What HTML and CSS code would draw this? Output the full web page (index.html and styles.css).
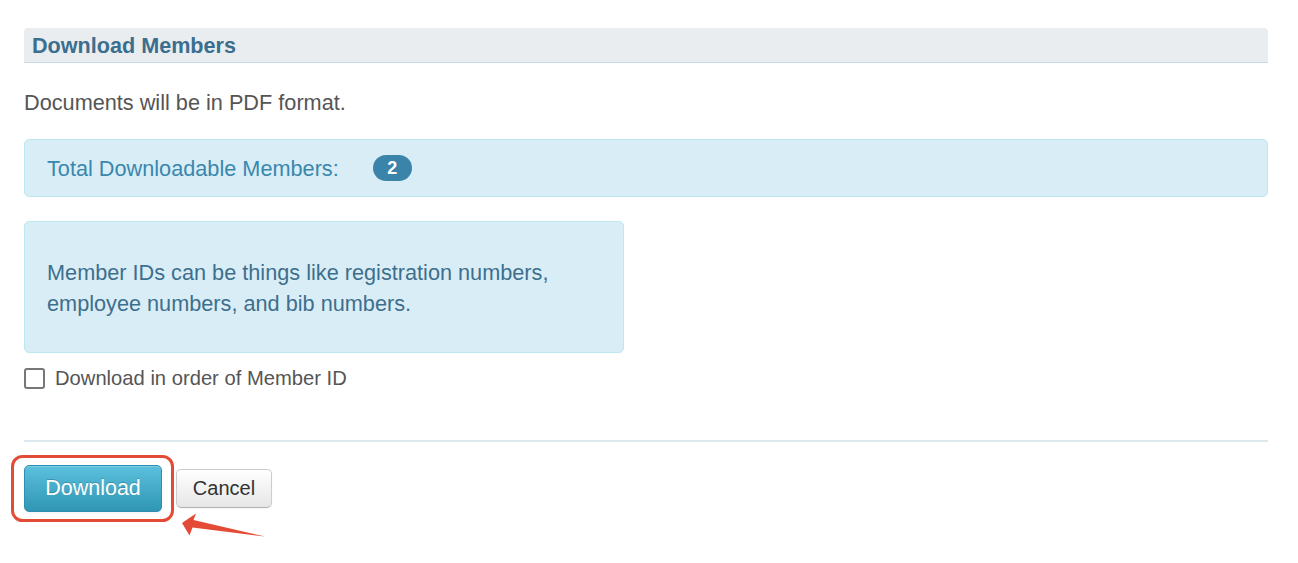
FILE: index.html
```html
<!DOCTYPE html>
<html>
<head>
<meta charset="utf-8">
<link rel="stylesheet" href="styles.css">
</head>
<body>
<div class="page">
  <div class="panel">
    <h2 class="panel-title">Download Members</h2>
    <p class="intro">Documents will be in PDF format.</p>
    <div class="alert alert-total">
      <span class="total-label">Total Downloadable Members:</span>
      <span class="badge">2</span>
    </div>
    <div class="alert alert-note">
      Member IDs can be things like registration numbers,<br>employee numbers, and bib numbers.
    </div>
    <label class="check-row">
      <span class="checkbox"></span>
      <span class="check-label">Download in order of Member ID</span>
    </label>
    <hr class="divider">
    <div class="actions">
      <button class="btn btn-primary">Download</button>
      <button class="btn btn-default">Cancel</button>
    </div>
  </div>
  <svg class="annotation" width="1298" height="563" viewBox="0 0 1298 563">
    <rect x="12.5" y="456.5" width="160" height="64" rx="10" ry="10" fill="none" stroke="#e34b36" stroke-width="3"/>
    <polygon points="182,523 196,513.5 193.5,520 265,536.5 192.5,527.5 189.5,535.5" fill="#e34b36"/>
  </svg>
</div>
</body>
</html>
```

FILE: styles.css
```css
html, body {
  margin: 0;
  padding: 0;
  background: #ffffff;
}

.page {
  position: relative;
  width: 1298px;
  height: 563px;
  overflow: hidden;
  font-family: "Liberation Sans", Arial, sans-serif;
}

.panel {
  padding: 28px 30px 0 24px;
  width: 1244px;
}

.panel-title {
  margin: 0;
  height: 34px;
  line-height: 35px;
  padding-left: 8px;
  background: #e9edf0;
  border-bottom: 1px solid #c9dcea;
  border-radius: 4px 4px 0 0;
  font-size: 21.6px;
  font-weight: bold;
  color: #3b6e8f;
}

.intro {
  margin: 24px 0 21px 0;
  font-size: 21.7px;
  line-height: 31px;
  color: #555555;
}

.alert {
  background: #d9edf7;
  border: 1px solid #bce8f1;
  border-radius: 5px;
  font-size: 21.7px;
  line-height: 31px;
}

.alert-total {
  display: flex;
  align-items: center;
  height: 56px;
  padding: 0 22px;
  color: #3a87ad;
}

.badge {
  display: inline-flex;
  align-items: center;
  justify-content: center;
  margin-left: 34px;
  width: 39px;
  height: 26px;
  border-radius: 13px;
  background: #3a84aa;
  color: #ffffff;
  font-weight: bold;
  font-size: 18px;
  line-height: 26px;
}

.alert-note {
  width: 554px;
  margin-top: 24px;
  padding: 35px 22px 33px 22px;
  color: #3d6f8d;
}

.check-row {
  display: flex;
  align-items: center;
  margin-top: 14px;
  height: 22px;
}

.checkbox {
  display: inline-block;
  width: 17px;
  height: 17px;
  border: 2px solid #777777;
  border-radius: 3px;
  background: #ffffff;
}

.check-label {
  margin-left: 10px;
  font-size: 20.2px;
  color: #555555;
}

.divider {
  margin: 51px 0 0 0;
  border: 0;
  border-top: 2px solid #dde7ee;
  height: 0;
}

.actions {
  display: flex;
  align-items: center;
  gap: 14px;
  margin-top: 23px;
}

.btn {
  font-family: "Liberation Sans", Arial, sans-serif;
  cursor: pointer;
  border-radius: 5px;
}

.btn-primary {
  width: 138px;
  height: 47px;
  padding: 0;
  border: 1px solid #2f8fb0;
  background: linear-gradient(to bottom, #5bc0de, #2f96b4);
  color: #ffffff;
  font-size: 21.5px;
  text-shadow: 0 -1px 0 rgba(0, 0, 0, 0.2);
  box-shadow: inset 0 1px 0 rgba(255, 255, 255, 0.2), 0 1px 2px rgba(0, 0, 0, 0.05);
}

.btn-default {
  width: 96px;
  height: 39px;
  padding: 0;
  border: 1px solid #cccccc;
  border-bottom-color: #b3b3b3;
  background: linear-gradient(to bottom, #ffffff, #e6e6e6);
  color: #333333;
  font-size: 20px;
  box-shadow: inset 0 1px 0 rgba(255, 255, 255, 0.2), 0 1px 2px rgba(0, 0, 0, 0.05);
}

.annotation {
  position: absolute;
  left: 0;
  top: 0;
  pointer-events: none;
}
```
